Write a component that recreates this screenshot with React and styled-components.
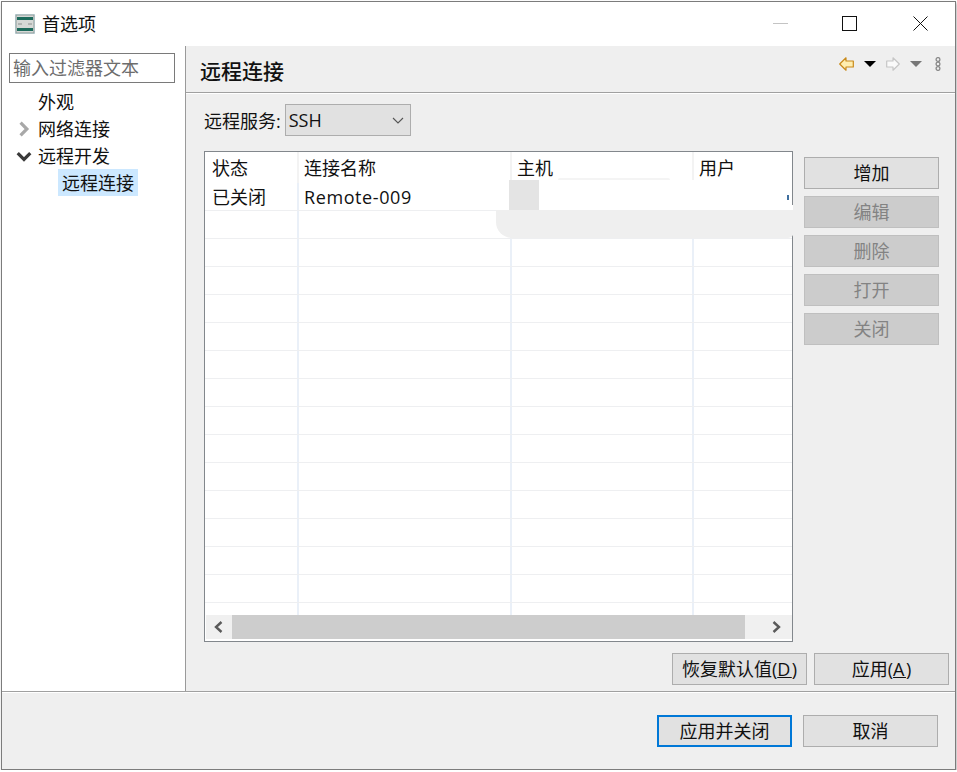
import React from 'react';
import styled, { createGlobalStyle } from 'styled-components';

const GlobalStyle = createGlobalStyle`
  html, body {
    margin: 0;
    padding: 0;
    background: #fff;
    overflow: hidden;
  }
  body {
    font-family: "Open Sans", "Noto Sans CJK SC", sans-serif;
    font-size: 18px;
    color: #111;
  }
`;

const Window = styled.div`
  box-sizing: border-box;
  width: 955px;
  height: 769px;
  margin: 1px 0 0 1px;
  display: flex;
  flex-direction: column;
  border: 1px solid #7c7c7c;
  background: #efefef;
  box-shadow: 1px 2px 3px rgba(0, 0, 0, 0.3);
`;

const TitleBar = styled.div`
  height: 44px;
  flex: none;
  display: flex;
  align-items: center;
  padding-left: 13px;
  background: #fff;
`;

const AppIcon = styled.svg`
  width: 20px;
  height: 20px;
  margin-right: 7px;
`;

const TitleText = styled.span`
  font-size: 18px;
  line-height: 24px;
`;

const WindowControls = styled.div`
  margin-left: auto;
  display: flex;
  padding: 0 27px 1px 0;
`;

const WindowButton = styled.div`
  width: 15px;
  height: 15px;
  margin-left: ${(p) => p.$offset || 0}px;

  svg {
    display: block;
  }
`;

const Main = styled.div`
  flex: 1;
  min-height: 0;
  display: flex;
`;

const Sidebar = styled.div`
  box-sizing: border-box;
  width: 184px;
  flex: none;
  padding: 7px 0 0 7px;
  background: #fff;
  border-right: 1px solid #9a9a9a;
`;

const FilterInput = styled.input`
  box-sizing: border-box;
  display: block;
  width: 166px;
  height: 30px;
  padding: 0 3px;
  border: 1px solid #7a7a7a;
  outline: none;
  font: inherit;
  color: #111;

  &::placeholder {
    color: #6d6d6d;
    opacity: 1;
  }
`;

const Tree = styled.div`
  margin-top: 5px;
`;

const TreeRow = styled.div`
  height: 27px;
  display: flex;
  align-items: center;
  padding-left: ${(p) => (p.$child ? '49px' : '0')};
`;

const TreeArrow = styled.span`
  width: 29px;
  height: 27px;
  flex: none;
  display: flex;
  align-items: center;
  justify-content: center;
`;

const TreeLabel = styled.span`
  height: 27px;
  box-sizing: border-box;
  padding: 2px ${(p) => (p.$selected ? '4px' : '0')} 0;
  line-height: 25px;
  background: ${(p) => (p.$selected ? '#cce8ff' : 'transparent')};
`;

const Pane = styled.div`
  flex: 1;
  min-width: 0;
  display: flex;
  flex-direction: column;
`;

const PaneHeader = styled.div`
  box-sizing: border-box;
  height: 47px;
  flex: none;
  display: flex;
  justify-content: space-between;
  padding-left: 14px;
  border-bottom: 1px solid #a0a0a0;
  box-shadow: 0 1px 0 #fff;
`;

const PaneTitle = styled.h2`
  margin: 0;
  font-size: 21px;
  font-weight: 500;
  line-height: 51px;
`;

const HeaderTools = styled.div`
  display: flex;
  align-items: center;
  gap: 10px;
  height: 14px;
  margin: 11px 13px 0 0;
`;

const PaneBody = styled.div`
  flex: 1;
  min-height: 0;
  display: flex;
  flex-direction: column;
  padding: 11px 6px 6px 18px;
`;

const ServiceRow = styled.div`
  height: 32px;
  flex: none;
  display: flex;
  align-items: center;
  gap: 4px;
`;

const ServiceSelect = styled.div`
  box-sizing: border-box;
  width: 126px;
  height: 32px;
  display: flex;
  align-items: center;
  justify-content: space-between;
  padding: 0 5px 0 3px;
  border: 1px solid #adadad;
  background: #e1e1e1;
`;

const ContentRow = styled.div`
  flex: 1;
  min-height: 0;
  display: flex;
  gap: 11px;
  margin-top: 15px;
`;

const Table = styled.div`
  position: relative;
  box-sizing: border-box;
  width: 589px;
  height: 491px;
  flex: none;
  display: flex;
  flex-direction: column;
  border: 1px solid #82878c;
  background: #fff;
`;

const Rows = styled.div`
  flex: 1;
  min-height: 0;
  overflow: hidden;
`;

const Row = styled.div`
  box-sizing: border-box;
  height: ${(p) => (p.$header ? '31px' : '28px')};
  display: grid;
  grid-template-columns: 94px 213px 182px 1fr;
  border-bottom: ${(p) => (p.$header ? 'none' : '1px solid #eeeff1')};
`;

const Cell = styled.div`
  box-sizing: border-box;
  padding-left: 5px;
  line-height: ${(p) => (p.$header ? '33px' : '29px')};
  letter-spacing: ${(p) => (p.$latin ? '0.6px' : '0')};
  white-space: nowrap;
  overflow: hidden;
  border-right: 2px solid ${(p) => (p.$header ? '#f3f3f3' : '#eaf0f8')};

  &:first-child {
    padding-left: 7px;
  }

  &:last-child {
    border-right: none;
  }
`;

const ScrollBar = styled.div`
  height: 24px;
  flex: none;
  display: flex;
  margin: 0 0 2px 1px;
  background: #f0f0f0;
`;

const ScrollButton = styled.div`
  width: ${(p) => p.$width}px;
  flex: none;
  display: flex;
  align-items: center;
  justify-content: ${(p) => (p.$end ? 'flex-end' : 'center')};
  padding-right: ${(p) => (p.$end ? '9px' : '0')};
  box-sizing: border-box;
`;

const ScrollThumb = styled.div`
  flex: 1;
  background: #cdcdcd;
`;

/* painted-over patch in the screenshot, sits on top of the table */
const Patch = styled.div`
  position: absolute;
  left: ${(p) => p.$left}px;
  top: ${(p) => p.$top}px;
  width: ${(p) => p.$w}px;
  height: ${(p) => p.$h}px;
  background: ${(p) => p.$bg};
  border-radius: ${(p) => p.$radius || '0'};
`;

const ButtonColumn = styled.div`
  display: flex;
  flex-direction: column;
  gap: 7px;
  padding-top: 6px;
`;

const Button = styled.button`
  box-sizing: border-box;
  width: 135px;
  height: 32px;
  flex: none;
  padding: 0;
  font: inherit;
  line-height: 28px;
  color: #111;
  background: #e1e1e1;
  border: 1px solid #adadad;
  border-radius: 0;

  u {
    letter-spacing: 1.5px;
  }

  &:disabled {
    color: #838383;
    background: #cccccc;
    border-color: #bfbfbf;
  }
`;

const PrimaryButton = styled(Button)`
  border: 2px solid #0078d7;
`;

const DefaultsRow = styled.div`
  flex: none;
  display: flex;
  justify-content: flex-end;
  gap: 7px;
  margin-top: 11px;
`;

const Footer = styled.div`
  box-sizing: border-box;
  height: 78px;
  flex: none;
  display: flex;
  justify-content: flex-end;
  gap: 11px;
  padding: 23px 17px 0 0;
  border-top: 1px solid #a0a0a0;
  box-shadow: inset 0 1px 0 #fff;
`;

const ArrowLeft = ({ fill, stroke }) => (
  <svg width="15" height="14" viewBox="0 0 15 14">
    <path d="M0.7 7 L7 0.8 V4 H14.3 V10 H7 V13.2 Z" fill={fill} stroke={stroke} strokeWidth="1.2" strokeLinejoin="round" />
  </svg>
);

const ArrowRight = ({ fill, stroke }) => (
  <svg width="14" height="14" viewBox="0 0 14 14">
    <path d="M13.3 7 L7 0.8 V4 H0.7 V10 H7 V13.2 Z" fill={fill} stroke={stroke} strokeWidth="1.2" strokeLinejoin="round" />
  </svg>
);

const DropTriangle = ({ color }) => (
  <svg width="12" height="14" viewBox="0 0 12 14">
    <path d="M0 4 H12 L6 10 Z" fill={color} />
  </svg>
);

const Chevron = ({ d, color, width = 2.4, size = 14 }) => (
  <svg width={size} height={size} viewBox="0 0 14 14">
    <path d={d} fill="none" stroke={color} strokeWidth={width} />
  </svg>
);

const rows = Array.from({ length: 15 }, (_, i) => i);

export default function App() {
  return (
    <>
      <GlobalStyle />
      <Window>
        <TitleBar>
          <AppIcon viewBox="0 0 20 20">
            <rect x="0" y="0" width="20" height="20" fill="#cfe6ef" />
            <rect x="1" y="1" width="18" height="18" fill="#d5d8d6" stroke="#8f9a98" />
            <rect x="2" y="3" width="16" height="3" fill="#1d6b5c" />
            <rect x="2" y="14" width="16" height="3" fill="#1d6b5c" />
            <path d="M3 10 H7 M13 10 H17" stroke="#8a8f8e" />
          </AppIcon>
          <TitleText>首选项</TitleText>
          <WindowControls>
            <WindowButton>
              <svg width="15" height="15" viewBox="0 0 15 15">
                <path d="M0 7.5 H15" stroke="#c4c4c4" />
              </svg>
            </WindowButton>
            <WindowButton $offset={54}>
              <svg width="15" height="15" viewBox="0 0 15 15">
                <rect x="0.5" y="0.5" width="14" height="14" fill="none" stroke="#111" />
              </svg>
            </WindowButton>
            <WindowButton $offset={56}>
              <svg width="15" height="15" viewBox="0 0 15 15">
                <path d="M0.5 0.5 L14.5 14.5 M14.5 0.5 L0.5 14.5" stroke="#111" />
              </svg>
            </WindowButton>
          </WindowControls>
        </TitleBar>
        <Main>
          <Sidebar>
            <FilterInput placeholder="输入过滤器文本" />
            <Tree>
              <TreeRow>
                <TreeArrow />
                <TreeLabel>外观</TreeLabel>
              </TreeRow>
              <TreeRow>
                <TreeArrow>
                  <Chevron d="M4 1.5 L9.5 7 L4 12.5" color="#a8a8a8" width="2.8" size={16} />
                </TreeArrow>
                <TreeLabel>网络连接</TreeLabel>
              </TreeRow>
              <TreeRow>
                <TreeArrow>
                  <Chevron d="M1.5 4.5 L7 10 L12.5 4.5" color="#3a3a3a" width="2.8" size={16} />
                </TreeArrow>
                <TreeLabel>远程开发</TreeLabel>
              </TreeRow>
              <TreeRow $child>
                <TreeLabel $selected>远程连接</TreeLabel>
              </TreeRow>
            </Tree>
          </Sidebar>
          <Pane>
            <PaneHeader>
              <PaneTitle>远程连接</PaneTitle>
              <HeaderTools>
                <ArrowLeft fill="#ffeeb0" stroke="#c98a1a" />
                <DropTriangle color="#000" />
                <ArrowRight fill="#fafafa" stroke="#c6c6c6" />
                <DropTriangle color="#777" />
                <svg width="8" height="14" viewBox="0 0 8 14" style={{ marginLeft: 2 }}>
                  <g fill="none" stroke="#8a8a8a" strokeWidth="1.3">
                    <circle cx="4" cy="2.5" r="1.9" />
                    <circle cx="4" cy="7" r="1.9" />
                    <circle cx="4" cy="11.5" r="1.9" />
                  </g>
                </svg>
              </HeaderTools>
            </PaneHeader>
            <PaneBody>
              <ServiceRow>
                <span>远程服务:</span>
                <ServiceSelect>
                  <span>SSH</span>
                  <Chevron d="M2 5 L7 10 L12 5" color="#555" width="1.1" />
                </ServiceSelect>
              </ServiceRow>
              <ContentRow>
                <Table>
                  <Rows>
                    <Row $header>
                      <Cell $header>状态</Cell>
                      <Cell $header>连接名称</Cell>
                      <Cell $header>主机</Cell>
                      <Cell $header>用户</Cell>
                    </Row>
                    <Row>
                      <Cell>已关闭</Cell>
                      <Cell $latin>Remote-009</Cell>
                      <Cell />
                      <Cell />
                    </Row>
                    {rows.map((i) => (
                      <Row key={i}>
                        <Cell />
                        <Cell />
                        <Cell />
                        <Cell />
                      </Row>
                    ))}
                  </Rows>
                  <ScrollBar>
                    <ScrollButton $width={26}>
                      <Chevron d="M9.5 2 L4 7 L9.5 12" color="#5a5a5a" width="2.4" />
                    </ScrollButton>
                    <ScrollThumb />
                    <ScrollButton $width={47} $end>
                      <Chevron d="M4.5 2 L10 7 L4.5 12" color="#5a5a5a" width="2.4" />
                    </ScrollButton>
                  </ScrollBar>
                  <Patch $left={353} $top={26} $w={112} $h={2} $bg="#f4f4f4" $radius="3px 3px 0 0" />
                  <Patch $left={304} $top={28} $w={30} $h={30} $bg="#e4e4e4" />
                  <Patch $left={334} $top={28} $w={253} $h={30} $bg="#fff" />
                  <Patch $left={587} $top={53} $w={1} $h={5} $bg="#fff" />
                  <Patch $left={582} $top={43} $w={2} $h={5} $bg="#3f6f9f" />
                  <Patch $left={291} $top={58} $w={298} $h={28} $bg="#efefef" $radius="0 0 6px 16px" />
                </Table>
                <ButtonColumn>
                  <Button>增加</Button>
                  <Button disabled>编辑</Button>
                  <Button disabled>删除</Button>
                  <Button disabled>打开</Button>
                  <Button disabled>关闭</Button>
                </ButtonColumn>
              </ContentRow>
              <DefaultsRow>
                <Button>恢复默认值(<u>D</u>)</Button>
                <Button>应用(<u>A</u>)</Button>
              </DefaultsRow>
            </PaneBody>
          </Pane>
        </Main>
        <Footer>
          <PrimaryButton>应用并关闭</PrimaryButton>
          <Button>取消</Button>
        </Footer>
      </Window>
    </>
  );
}
